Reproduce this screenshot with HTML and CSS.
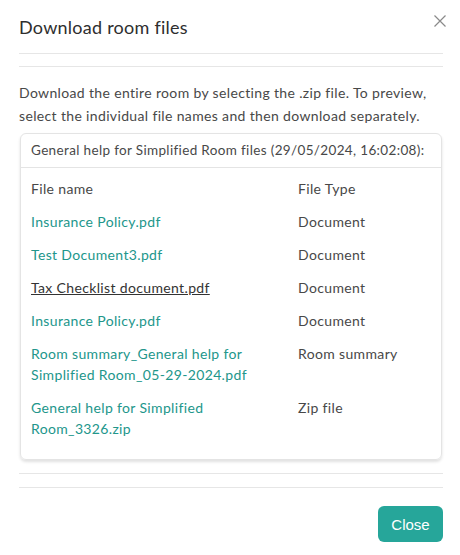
FILE: index.html
```html
<!DOCTYPE html>
<html>
<head>
<meta charset="utf-8">
<link rel="stylesheet" href="styles.css">
</head>
<body>
<div class="modal">
  <div class="modal-header">
    <h1 class="title">Download room files</h1>
    <button class="close-x" aria-label="Close">
      <svg width="12" height="12" viewBox="0 0 12 12"><path d="M0.5 0.5L11.5 11.5M11.5 0.5L0.5 11.5" stroke="#8a8a8a" stroke-width="1.2" fill="none"/></svg>
    </button>
  </div>
  <div class="spacer"></div>
  <p class="intro">Download the entire room by selecting the .zip file. To preview, select the individual file names and then download separately.</p>
  <div class="card">
    <div class="card-header">General help for Simplified Room files (29/05/2024, 16:02:08):</div>
    <div class="files">
      <div class="row head"><span class="name">File name</span><span class="type">File Type</span></div>
      <div class="row"><a class="name link">Insurance Policy.pdf</a><span class="type">Document</span></div>
      <div class="row"><a class="name link">Test Document3.pdf</a><span class="type">Document</span></div>
      <div class="row"><a class="name link hover">Tax Checklist document.pdf</a><span class="type">Document</span></div>
      <div class="row"><a class="name link">Insurance Policy.pdf</a><span class="type">Document</span></div>
      <div class="row"><a class="name link">Room summary_General help for Simplified Room_05-29-2024.pdf</a><span class="type">Room summary</span></div>
      <div class="row"><a class="name link">General help for Simplified Room_3326.zip</a><span class="type">Zip file</span></div>
    </div>
  </div>
  <div class="spacer top"></div>
  <div class="footer">
    <button class="btn">Close</button>
  </div>
</div>
</body>
</html>
```

FILE: styles.css
```css
html, body {
  margin: 0;
  padding: 0;
  background: #fff;
}
body {
  font-family: "Lato", "Noto Sans", sans-serif;
  color: #444;
  letter-spacing: 0.35px;
}
.modal {
  padding: 0 17px 0 19px;
}
.modal-header {
  height: 54px;
  border-bottom: 1px solid #e6e6e6;
  display: flex;
  justify-content: space-between;
  align-items: flex-start;
  box-sizing: border-box;
}
.title {
  margin: 16px 0 0;
  font-size: 18px;
  font-weight: 400;
  line-height: 22px;
  letter-spacing: 0.25px;
  color: #2e2e2e;
}
.close-x {
  margin: 15px -3px 0 0;
  padding: 0;
  border: 0;
  background: none;
  width: 12px;
  height: 12px;
  display: flex;
}
.spacer {
  height: 12px;
  border-bottom: 1px solid #e6e6e6;
}
.spacer.top {
  height: 13px;
  border-top: 1px solid #e6e6e6;
  margin-top: 13px;
}
.intro {
  margin: 14px 0 6px;
  font-size: 14px;
  line-height: 23px;
  color: #484848;
}
.card {
  margin: 0 1px;
  border: 1px solid #e4e4e4;
  border-radius: 6px;
  box-shadow: 0 2px 3px rgba(0, 0, 0, 0.12);
  padding-bottom: 14px;
}
.card-header {
  height: 34px;
  box-sizing: border-box;
  border-bottom: 1px solid #e4e4e4;
  padding: 0 10px;
  font-size: 13.5px;
  line-height: 33px;
  color: #484848;
  white-space: nowrap;
}
.files {
  padding: 4px 10px 0;
}
.row {
  display: grid;
  grid-template-columns: 267px 1fr;
  padding: 6px 0;
  font-size: 14px;
  line-height: 21px;
}
.name {
  padding-right: 14px;
}
.link {
  color: #22968b;
  text-decoration: none;
  cursor: pointer;
}
.link.hover {
  color: #333;
  text-decoration: underline;
}
.type {
  color: #484848;
}
.head .name, .head .type {
  color: #484848;
}
.footer {
  display: flex;
  justify-content: flex-end;
  padding-top: 18px;
}
.btn {
  width: 65px;
  height: 36px;
  border: 0;
  border-radius: 6px;
  background: #26a69a;
  color: #fff;
  font-family: "Liberation Sans", Arial, sans-serif;
  font-size: 15px;
  font-weight: 400;
  letter-spacing: 0;
  padding: 0;
}
```
